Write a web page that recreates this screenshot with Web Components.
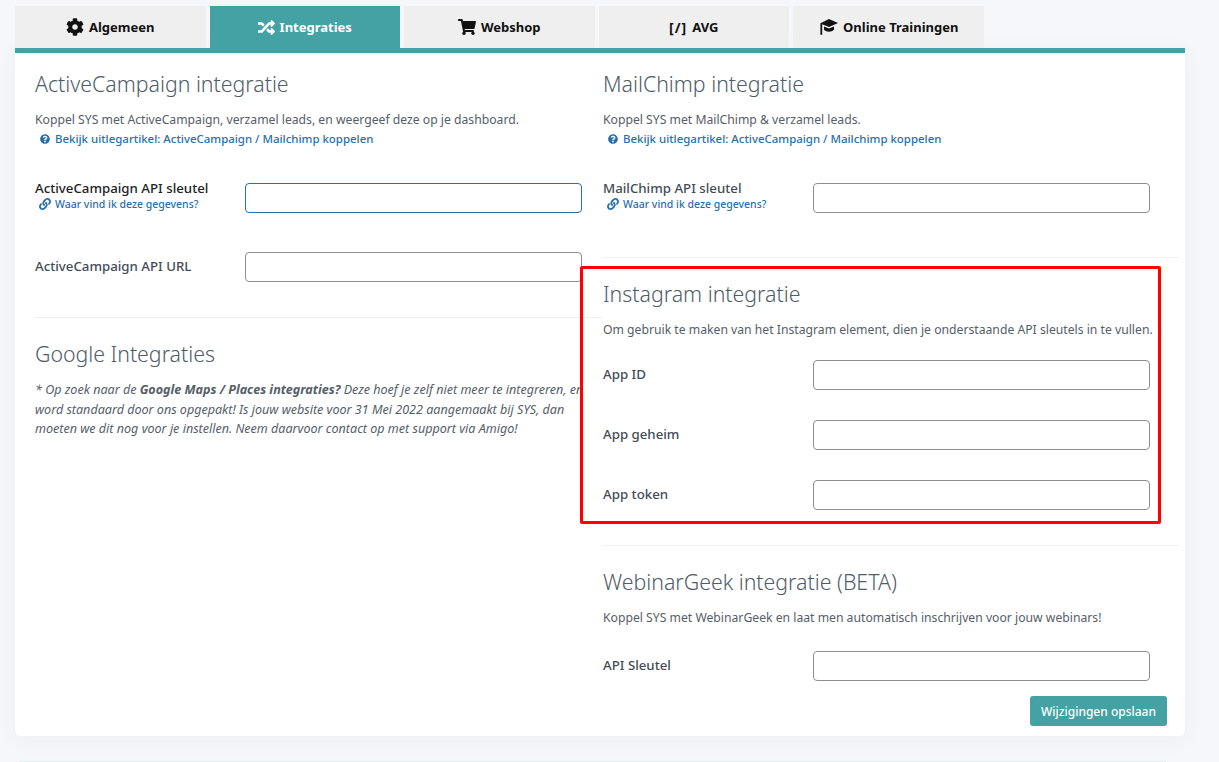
<!DOCTYPE html>
<html lang="nl"><head><meta charset="utf-8"><title>Integraties</title>
<style>
html,body{margin:0;height:762px;overflow:hidden;background:#f6f7fa;font-family:"Noto Sans",sans-serif;}
</style></head><body>
<settings-page></settings-page>
<script>
const I={
cog:['0 0 512 512','M487.4 315.7l-42.6-24.6c4.3-23.2 4.3-47 0-70.2l42.6-24.6c4.9-2.8 7.1-8.6 5.5-14-11.1-35.6-30-67.8-54.7-94.6-3.8-4.1-10-5.1-14.8-2.3L380.8 110c-17.9-15.4-38.5-27.3-60.8-35.1V25.8c0-5.6-3.9-10.5-9.4-11.7-36.7-8.2-74.3-7.8-109.2 0-5.5 1.2-9.4 6.1-9.4 11.7V75c-22.2 7.9-42.8 19.8-60.8 35.1L88.7 85.5c-4.9-2.8-11-1.9-14.8 2.3-24.7 26.7-43.6 58.9-54.7 94.6-1.7 5.4.6 11.2 5.5 14L67.3 221c-4.3 23.2-4.3 47 0 70.2l-42.6 24.6c-4.9 2.8-7.1 8.6-5.5 14 11.1 35.6 30 67.8 54.7 94.6 3.8 4.1 10 5.1 14.8 2.3l42.6-24.6c17.9 15.4 38.5 27.3 60.8 35.1v49.2c0 5.6 3.9 10.5 9.4 11.7 36.7 8.2 74.3 7.8 109.2 0 5.5-1.2 9.4-6.1 9.4-11.7v-49.2c22.2-7.9 42.8-19.8 60.8-35.1l42.6 24.6c4.9 2.8 11 1.9 14.8-2.3 24.7-26.7 43.6-58.9 54.7-94.6 1.5-5.5-.7-11.3-5.6-14.1zM256 336c-44.1 0-80-35.9-80-80s35.9-80 80-80 80 35.9 80 80-35.9 80-80 80z'],
random:['0 0 512 512','M504.971 359.029c9.373 9.373 9.373 24.569 0 33.941l-80 79.984c-15.01 15.01-40.971 4.49-40.971-16.971V416h-58.785a12.004 12.004 0 0 1-8.773-3.812l-70.556-75.596 53.333-57.143L352 336h32v-39.981c0-21.438 25.943-31.998 40.971-16.971l80 79.981zM12 176h84l52.781 56.551 53.333-57.143-70.556-75.596A11.999 11.999 0 0 0 122.785 96H12c-6.627 0-12 5.373-12 12v56c0 6.627 5.373 12 12 12zm372 0v39.984c0 21.46 25.961 31.98 40.971 16.971l80-79.984c9.373-9.373 9.373-24.569 0-33.941l-80-79.981C409.943 24.021 384 34.582 384 56.019V96h-58.785a12.004 12.004 0 0 0-8.773 3.812L96 336H12c-6.627 0-12 5.373-12 12v56c0 6.627 5.373 12 12 12h110.785c3.326 0 6.503-1.381 8.773-3.812L352 176h32z'],
cart:['0 0 576 512','M528.12 301.319l47.273-208C578.806 78.301 567.391 64 551.99 64H159.208l-9.166-44.81C147.758 8.021 137.93 0 126.529 0H24C10.745 0 0 10.745 0 24v16c0 13.255 10.745 24 24 24h69.883l70.248 343.435C147.325 417.1 136 435.222 136 456c0 30.928 25.072 56 56 56s56-25.072 56-56c0-15.674-6.447-29.835-16.824-40h209.647C430.447 426.165 424 440.326 424 456c0 30.928 25.072 56 56 56s56-25.072 56-56c0-22.172-12.888-41.332-31.579-50.405l5.517-24.276c3.413-15.018-8.002-29.319-23.403-29.319H218.117l-6.545-32h293.145c11.206 0 20.92-7.754 23.403-18.681z'],
cap:['0 0 20 16','M11 0L20 4 11 8 4.2 5.2V15.8H2.4V4.3zM6 7.4l5 2.2 5-2.2v3.3c-1.2 1.3-3 2-5 2s-3.8-.7-5-2z'],
help:['0 0 512 512','M504 256c0 136.997-111.043 248-248 248S8 392.997 8 256C8 119.083 119.043 8 256 8s248 111.083 248 248zM262.655 90c-54.497 0-89.255 22.957-116.549 63.758-3.536 5.286-2.353 12.415 2.715 16.258l34.699 26.31c5.205 3.947 12.621 3.008 16.665-2.122 17.864-22.658 30.113-35.797 57.303-35.797 20.429 0 45.698 13.148 45.698 32.958 0 14.976-12.363 22.667-32.534 33.976C247.128 238.528 216 254.941 216 296v4c0 6.627 5.373 12 12 12h56c6.627 0 12-5.373 12-12v-1.333c0-28.462 83.186-29.647 83.186-106.667 0-58.002-60.165-102-116.531-102zM256 338c-25.365 0-46 20.635-46 46 0 25.364 20.635 46 46 46s46-20.636 46-46c0-25.365-20.635-46-46-46z'],
link:['0 0 512 512','M326.612 185.391c59.747 59.809 58.927 155.698.36 214.59-.11.12-.24.25-.36.37l-67.2 67.2c-59.27 59.27-155.699 59.262-214.96 0-59.27-59.26-59.27-155.7 0-214.96l37.106-37.106c9.84-9.84 26.786-3.3 27.294 10.606.648 17.722 3.826 35.527 9.69 52.721 1.986 5.822.567 12.262-3.783 16.612l-13.087 13.087c-28.026 28.026-28.905 73.66-1.155 101.96 28.024 28.579 74.086 28.749 102.325.51l67.2-67.19c28.191-28.191 28.073-73.757 0-101.83-3.701-3.694-7.429-6.564-10.341-8.569a16.037 16.037 0 0 1-6.947-12.606c-.396-10.567 3.348-21.456 11.698-29.806l21.054-21.055c5.521-5.521 14.182-6.199 20.584-1.731a152.482 152.482 0 0 1 20.522 17.197zM467.547 44.449c-59.261-59.262-155.69-59.27-214.96 0l-67.2 67.2c-.12.12-.25.25-.36.37-58.566 58.892-59.387 154.781.36 214.59a152.454 152.454 0 0 0 20.521 17.196c6.402 4.468 15.064 3.789 20.584-1.731l21.054-21.055c8.35-8.35 12.094-19.239 11.698-29.806a16.037 16.037 0 0 0-6.947-12.606c-2.912-2.005-6.64-4.875-10.341-8.569-28.073-28.073-28.191-73.639 0-101.83l67.2-67.19c28.239-28.239 74.3-28.069 102.325.51 27.75 28.3 26.872 73.934-1.155 101.96l-13.087 13.087c-4.35 4.35-5.769 10.79-3.783 16.612 5.864 17.194 9.042 34.999 9.69 52.721.509 13.906 17.454 20.446 27.294 10.606l37.106-37.106c59.271-59.259 59.271-155.699.001-214.959z']
};
function def(name,css,html){
  customElements.define(name,class extends HTMLElement{
    constructor(){super();const r=this.attachShadow({mode:'open'});r.innerHTML='<style>'+css+'</style>'+(typeof html==='function'?html(this):html);}
  });
}
def('fa-icon',':host{display:inline-flex;align-items:center;justify-content:center}svg{display:block;fill:currentColor}',h=>{
  const [vb,d]=I[h.getAttribute('name')];const s=+(h.getAttribute('size')||14);const [,,w,hh]=vb.split(' ').map(Number);
  return `<svg viewBox="${vb}" height="${s}" width="${s*w/hh}"><path d="${d}"/></svg>`;
});
def('tab-item',`:host{display:flex;align-items:center;justify-content:center;gap:5px;width:190.5px;height:42px;background:#efefef;color:#111;font-weight:700;font-size:13px}
:host([active]){background:#44a2a4;color:#fff}`,'<slot name="icon"></slot><slot></slot>');
def('tab-bar',':host{display:flex;gap:4px;padding-top:6px}','<slot></slot>');
def('help-link',':host{display:flex;align-items:center;gap:5px;color:#2a70ac;font-size:11.45px;font-weight:500;line-height:20px;padding:1px 0 0 5px;height:20px;margin-top:-2px}','<fa-icon name="help" size="10"></fa-icon><slot></slot>');
def('section-head',`:host{display:block}
h2{margin:0;font-size:21.3px;font-weight:300;line-height:26px;color:#4f5c69}
p{margin:13px 0 0;font-size:12.2px;line-height:20px;color:#555e68}`,h=>`<h2>${h.getAttribute('title')}</h2>`+(h.textContent.trim()?'<p><slot></slot></p>':''));
def('field-row',`:host{display:flex;align-items:flex-start}
.l{flex:none;width:210px;font-size:13.25px;font-weight:500;line-height:18px;color:#444c55;padding-top:5px}
.box{flex:none;width:337px;height:30px;box-sizing:border-box;border:1px solid #8e8e8e;border-radius:4px;background:#fff}
:host([focused]) .box{border-color:#2a70ac}
:host([focused]) .l{color:#222}
:host([hint]) .l{padding-top:0;margin-top:-4px}
.h{display:flex;align-items:center;gap:4px;padding-left:4px;font-size:10.5px;font-weight:500;line-height:14px;color:#2a70ac}`,h=>{
 const hint=h.hasAttribute('hint')?`<div class="h"><fa-icon name="link" size="12"></fa-icon>Waar vind ik deze gegevens?</div>`:'';
 return `<div class="l">${h.getAttribute('label')}${hint}</div><div class="box"></div>`;});
def('rule-line',':host{display:block;height:1px;background:#eff0f2}','');
def('save-button',':host{display:inline-flex;align-items:center;justify-content:center;width:137px;height:30px;border-radius:3px;background:#44a2a4;color:#fff;font-size:12px;font-weight:500}','<slot></slot>');
def('settings-page',`:host{display:block;padding:0 34px 0 15px;position:relative}
.panel{display:grid;grid-template-columns:568px 577px;height:688px;box-sizing:border-box;border-top:5px solid #44a2a4;background:#fff;border-radius:0 0 6px 6px;box-shadow:0 4px 20px rgba(60,70,90,.05);padding-left:20px}
.left,.right{display:flex;flex-direction:column;padding-top:18px}
section-head,field-row,rule-line,help-link{flex:none}
.ital{margin:13px 0 0;font-size:12.55px;line-height:19.5px;font-style:italic;color:#555e68;white-space:pre;width:568px}
.ital span{display:block}
.ital b{font-weight:700}
.foot{display:flex;justify-content:flex-end;padding:15px 13px 0 0}
.mark{position:absolute;left:580px;top:266px;width:581px;height:258px;box-sizing:border-box;border:3px solid #f00;border-radius:2px;pointer-events:none}
.under{margin:25px 19px 0 4px;height:1px;background:#e3eeee}
.sq{font-size:14px;letter-spacing:1px}`,`
<tab-bar>
<tab-item><fa-icon slot="icon" name="cog" size="18"></fa-icon>Algemeen</tab-item>
<tab-item active><fa-icon slot="icon" name="random" size="17"></fa-icon>Integraties</tab-item>
<tab-item><fa-icon slot="icon" name="cart" size="16"></fa-icon>Webshop</tab-item>
<tab-item><span slot="icon" class="sq">[/]</span>AVG</tab-item>
<tab-item><fa-icon slot="icon" name="cap" size="16"></fa-icon>Online Trainingen</tab-item>
</tab-bar>
<div class="panel">
<div class="left">
<section-head title="ActiveCampaign integratie">Koppel SYS met ActiveCampaign, verzamel leads, en weergeef deze op je dashboard.</section-head>
<help-link>Bekijk uitlegartikel: ActiveCampaign / Mailchimp koppelen</help-link>
<field-row style="margin-top:34px" focused hint label="ActiveCampaign API sleutel"></field-row>
<field-row style="margin-top:39px" label="ActiveCampaign API URL"></field-row>
<rule-line style="margin-top:35px"></rule-line>
<section-head style="margin-top:23px" title="Google Integraties"></section-head>
<p class="ital"><span>* Op zoek naar de <b>Google Maps / Places integraties?</b> Deze hoef je zelf niet meer te integreren, en</span><span>word standaard door ons opgepakt! Is jouw website voor 31 Mei 2022 aangemaakt bij SYS, dan</span><span>moeten we dit nog voor je instellen. Neem daarvoor contact op met support via Amigo!</span></p>
</div>
<div class="right">
<section-head title="MailChimp integratie">Koppel SYS met MailChimp &amp; verzamel leads.</section-head>
<help-link>Bekijk uitlegartikel: ActiveCampaign / Mailchimp koppelen</help-link>
<field-row style="margin-top:34px" hint label="MailChimp API sleutel"></field-row>
<rule-line style="margin-top:44px"></rule-line>
<section-head style="margin-top:23px" title="Instagram integratie">Om gebruik te maken van het Instagram element, dien je onderstaande API sleutels in te vullen.</section-head>
<field-row style="margin-top:20px" label="App ID"></field-row>
<field-row style="margin-top:30px" label="App geheim"></field-row>
<field-row style="margin-top:30px" label="App token"></field-row>
<rule-line style="margin-top:35px"></rule-line>
<section-head style="margin-top:23px" title="WebinarGeek integratie (BETA)">Koppel SYS met WebinarGeek en laat men automatisch inschrijven voor jouw webinars!</section-head>
<field-row style="margin-top:23px" label="API Sleutel"></field-row>
<div class="foot"><save-button>Wijzigingen opslaan</save-button></div>
</div>
</div>
<div class="under"></div>
<div class="mark"></div>`);
</script>
</body></html>
